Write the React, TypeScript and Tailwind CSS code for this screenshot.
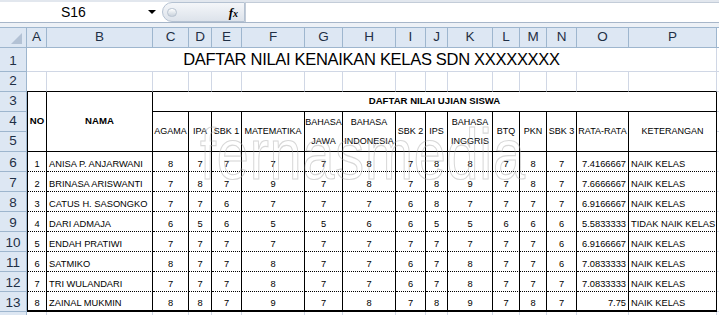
const hdr =
  "flex items-center justify-center border-r border-b border-[#9eb6ce] bg-[#dde7f3] text-[13.5px] text-[#1f2f45]";
const grid = "border-r border-b border-[#d0d7e5]";
const dataCell =
  "flex items-end justify-center border-r border-b border-black [border-bottom-style:dotted] pb-px text-[9.3px] leading-[11px]";
const lastCell =
  "flex items-end justify-center border-r border-b-2 border-black pb-px text-[9.3px] leading-[11px]";

const letters = ["A", "B", "C", "D", "E", "F", "G", "H", "I", "J", "K", "L", "M", "N", "O", "P"];

const students = [
  { no: 1, name: "ANISA P. ANJARWANI", n: [8, 7, 7, 7, 7, 8, 7, 8, 8, 7, 8, 7], avg: "7.4166667", ket: "NAIK KELAS" },
  { no: 2, name: "BRINASA ARISWANTI", n: [7, 8, 7, 9, 7, 8, 7, 8, 9, 7, 8, 7], avg: "7.6666667", ket: "NAIK KELAS" },
  { no: 3, name: "CATUS H. SASONGKO", n: [7, 7, 6, 7, 7, 7, 6, 8, 7, 7, 7, 7], avg: "6.9166667", ket: "NAIK KELAS" },
  { no: 4, name: "DARI ADMAJA", n: [6, 5, 6, 5, 5, 6, 6, 5, 5, 6, 6, 6], avg: "5.5833333", ket: "TIDAK NAIK KELAS" },
  { no: 5, name: "ENDAH PRATIWI", n: [7, 7, 7, 7, 7, 7, 7, 7, 7, 7, 7, 6], avg: "6.9166667", ket: "NAIK KELAS" },
  { no: 6, name: "SATMIKO", n: [8, 7, 7, 8, 7, 7, 6, 7, 8, 7, 7, 6], avg: "7.0833333", ket: "NAIK KELAS" },
  { no: 7, name: "TRI WULANDARI", n: [7, 7, 7, 8, 7, 7, 6, 7, 8, 7, 7, 7], avg: "7.0833333", ket: "NAIK KELAS" },
  { no: 8, name: "ZAINAL MUKMIN", n: [8, 8, 7, 9, 7, 8, 7, 8, 9, 7, 8, 7], avg: "7.75", ket: "NAIK KELAS" },
];

const subjects: { top: string; bottom?: string }[] = [
  { top: "AGAMA" },
  { top: "IPA" },
  { top: "SBK 1" },
  { top: "MATEMATIKA" },
  { top: "BAHASA", bottom: "JAWA" },
  { top: "BAHASA", bottom: "INDONESIA" },
  { top: "SBK 2" },
  { top: "IPS" },
  { top: "BAHASA", bottom: "INGGRIS" },
  { top: "BTQ" },
  { top: "PKN" },
  { top: "SBK 3" },
  { top: "RATA-RATA" },
  { top: "KETERANGAN" },
];

function FormulaBar() {
  return (
    <div className="flex h-[23px] items-end border-t-2 border-b border-t-[#e2e7ee] border-b-[#a7b6c9] bg-white">
      <div className="relative flex h-full w-[162px] items-center">
        <span className="ml-[61px] text-[14px] leading-none">S16</span>
        <span className="absolute left-[148px] top-[8px] h-0 w-0 border-x-[4px] border-t-[4px] border-x-transparent border-t-black" />
      </div>
      <div className="flex h-[20px] w-[83px] items-center justify-between rounded-l-full border border-[#b5c2d2] bg-linear-to-b from-[#f4f6f9] to-[#dde3eb] pl-[4px] pr-[6px]">
        <span className="h-[9px] w-[10px] rounded-full border border-[#b8c3d0] bg-linear-to-b from-white to-[#c9d2dc]" />
        <span className="font-['Liberation_Serif',serif] text-[13px] font-bold italic leading-none">
          f<span className="text-[10px]">x</span>
        </span>
      </div>
      <div className="h-[20px] flex-1 border-t border-l border-[#c3ccd8] bg-white" />
    </div>
  );
}

export default function App() {
  return (
    <div className="relative h-[315px] w-[719px] overflow-hidden bg-white font-['Liberation_Sans',Arial,sans-serif] text-black">
      <FormulaBar />
      <div className="h-[5px] border-b border-[#9eb6ce] bg-[#edf1f6]" />
      <div className="relative grid grid-cols-[27px_20px_106px_36px_23px_30px_63px_38px_53px_30px_22px_45px_27px_27px_30px_52px_88px_1fr] grid-rows-[20px_24px_repeat(13,20px)]">
        {/* column letters */}
        <div className="relative border-r border-b border-[#9eb6ce] bg-[#dde7f3]">
          <svg className="absolute right-[4px] bottom-[3px]" width="11" height="11" viewBox="0 0 11 11">
            <polygon points="11,0 11,11 0,11" fill="#b3c2d5" />
          </svg>
        </div>
        {letters.map((l) => (
          <div key={l} className={hdr}>
            {l}
          </div>
        ))}
        <div className="border-b border-[#9eb6ce] bg-white" />

        {/* row 1 */}
        <div className={`${hdr} pt-[4px]`}>1</div>
        <div className={`col-span-16 flex items-center justify-center ${grid} text-[16.5px] tracking-[-0.3px]`}>
          DAFTAR NILAI KENAIKAN KELAS SDN XXXXXXXX
        </div>
        <div className="border-b border-[#d0d7e5]" />

        {/* row 2 */}
        <div className={hdr}>2</div>
        {letters.map((l) => (
          <div key={l} className="border-r border-b border-r-[#d0d7e5] border-b-black" />
        ))}
        <div className="border-b border-[#d0d7e5]" />

        {/* row 3 */}
        <div className={hdr}>3</div>
        <div className="row-span-3 flex items-center justify-center border-x border-b border-black text-[9.6px] font-bold">
          NO
        </div>
        <div className="row-span-3 flex items-center justify-center border-r border-b border-black text-[9.6px] font-bold">
          NAMA
        </div>
        <div className="col-span-14 flex items-center justify-center border-r border-b border-black text-[9.6px] font-bold">
          DAFTAR NILAI UJIAN SISWA
        </div>
        <div className="border-b border-[#d0d7e5]" />

        {/* row 4-5 */}
        <div className={hdr}>4</div>
        {subjects.map((s, i) =>
          s.bottom ? (
            <div key={i} className="row-span-2 grid grid-rows-2 border-r border-b border-black text-[9px]">
              <span className="flex items-center justify-center pt-px">{s.top}</span>
              <span className="flex items-center justify-center">{s.bottom}</span>
            </div>
          ) : (
            <div key={i} className="row-span-2 flex items-center justify-center border-r border-b border-black text-[9px]">
              {s.top}
            </div>
          )
        )}
        <div className="border-b border-[#d0d7e5]" />
        <div className={hdr}>5</div>
        <div className="border-b border-[#d0d7e5]" />

        {/* data rows */}
        {students.map((s, r) => {
          const last = r === students.length - 1;
          const cell = last ? lastCell : dataCell;
          return [
            <div key={`h${r}`} className={`${hdr} pt-[3px]`}>
              {r + 6}
            </div>,
            <div key={`a${r}`} className={`${cell} border-l pb-[4px]`}>
              {s.no}
            </div>,
            <div key={`b${r}`} className={`${cell} justify-start pl-[2px]`}>
              {s.name}
            </div>,
            ...s.n.map((v, i) => (
              <div key={`n${r}-${i}`} className={cell}>
                {v}
              </div>
            )),
            <div key={`o${r}`} className={`${cell} justify-end pr-[2px]`}>
              {s.avg}
            </div>,
            <div key={`p${r}`} className={`${cell} justify-start pl-[2px]`}>
              {s.ket}
            </div>,
            <div key={`x${r}`} className="border-b border-[#d0d7e5]" />,
          ];
        })}

        {/* row 14 */}
        <div className={hdr}>14</div>
        {letters.map((l) => (
          <div key={l} className={grid} />
        ))}
        <div className="border-b border-[#d0d7e5]" />

        {/* watermark */}
        <div className="pointer-events-none absolute left-[200px] top-[90px] origin-left scale-x-[0.8] text-[72px] leading-none tracking-[1px] text-transparent opacity-45 [-webkit-text-stroke:1.2px_#a8a8a8]">
          fernasmedia
        </div>
      </div>
    </div>
  );
}
